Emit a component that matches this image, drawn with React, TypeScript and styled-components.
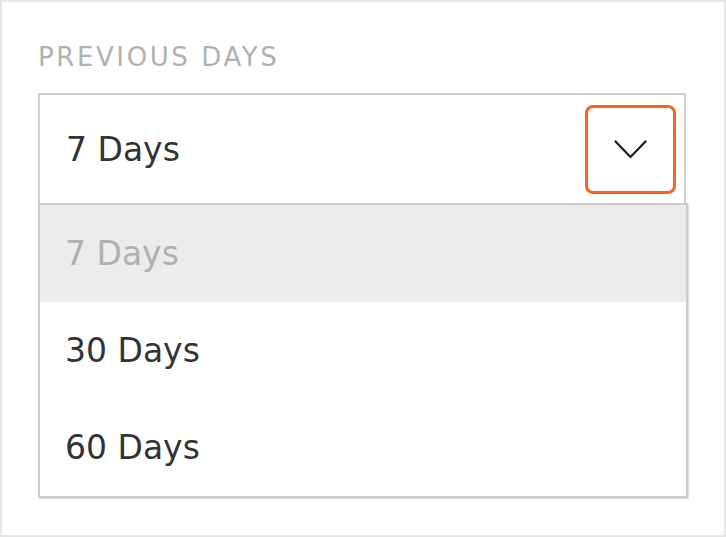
import { FC } from 'react';
import styled, { createGlobalStyle } from 'styled-components';

const GlobalStyle = createGlobalStyle`
  html, body {
    margin: 0;
    padding: 0;
    background: #fff;
  }
  body {
    font-family: 'DejaVu Sans', 'Liberation Sans', sans-serif;
  }
`;

const Frame = styled.div`
  box-sizing: border-box;
  width: 726px;
  height: 537px;
  border: 2px solid #e6e6e6;
  padding: 42px 0 0 36px;
  background: #fff;
`;

const Label = styled.div`
  font-size: 26px;
  letter-spacing: 2.6px;
  color: #b1b1b1;
  line-height: 26px;
  margin-bottom: 23px;
`;

const Field = styled.div`
  width: 650px;
`;

const SelectBox = styled.div`
  box-sizing: border-box;
  width: 648px;
  height: 110px;
  border: 2px solid #cfcfcf;
  border-bottom: none;
  display: flex;
  align-items: center;
  justify-content: space-between;
  padding: 0 8px 0 26px;
`;

const Value = styled.span`
  font-size: 33px;
  color: #333;
`;

const ToggleButton = styled.div`
  box-sizing: border-box;
  width: 91px;
  height: 89px;
  border: 3px solid #f26522;
  border-radius: 8px;
  display: flex;
  align-items: center;
  justify-content: center;
`;

const Menu = styled.ul`
  box-sizing: border-box;
  list-style: none;
  margin: 0;
  padding: 0;
  width: 650px;
  border: 2px solid #cdcdcd;
  box-shadow: 1px 1px 1px rgba(0, 0, 0, 0.12);
`;

const Option = styled.li<{ $selected?: boolean }>`
  height: 97px;
  display: flex;
  align-items: center;
  padding-left: 25px;
  font-size: 33px;
  color: ${p => (p.$selected ? '#b0b0b0' : '#333')};
  background: ${p => (p.$selected ? '#ececec' : '#fff')};
`;

const options = ['7 Days', '30 Days', '60 Days'];

const App: FC = () => (
  <>
    <GlobalStyle />
    <Frame>
      <Label>PREVIOUS DAYS</Label>
      <Field>
        <SelectBox>
          <Value>7 Days</Value>
          <ToggleButton>
            <svg width="33" height="19" viewBox="0 0 33 19" fill="none">
              <path d="M1.5 1.5 L16.5 17 L31.5 1.5" stroke="#1a1a1a" strokeWidth="2.2" strokeLinecap="round" strokeLinejoin="round" />
            </svg>
          </ToggleButton>
        </SelectBox>
        <Menu>
          {options.map((o, i) => (
            <Option key={o} $selected={i === 0}>{o}</Option>
          ))}
        </Menu>
      </Field>
    </Frame>
  </>
);

export default App;
